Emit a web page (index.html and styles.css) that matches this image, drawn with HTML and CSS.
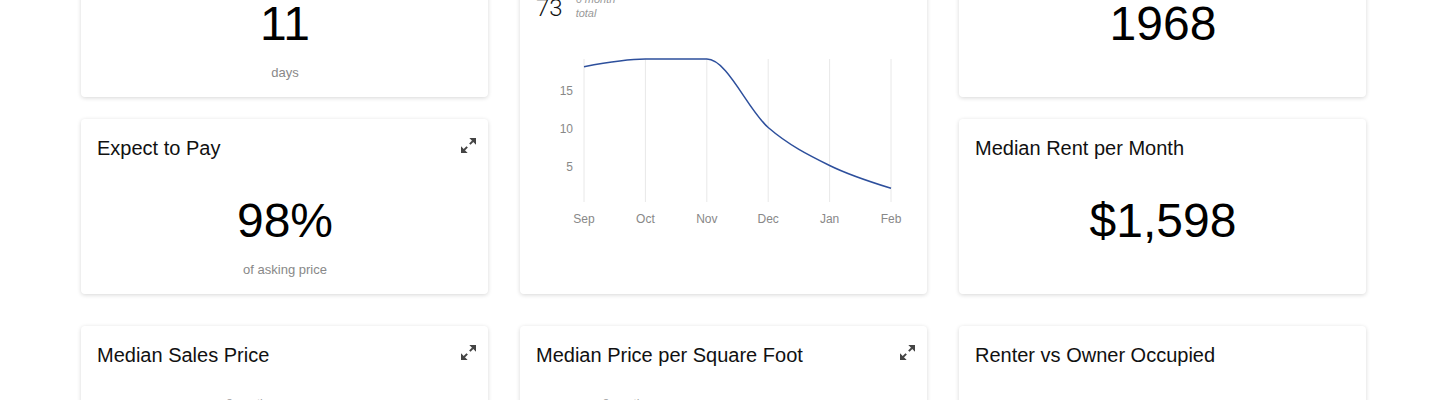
FILE: index.html
```html
<!DOCTYPE html>
<html lang="en">
<head>
<meta charset="utf-8">
<title>Market Overview</title>
<link rel="stylesheet" href="styles.css">
</head>
<body>
<main class="dashboard">
  <section class="grid grid-top">
    <article class="card stat-card">
      <header class="card-head"><h2 class="card-title">Days on Market</h2></header>
      <div class="stat-value">11</div>
      <div class="stat-note">days</div>
    </article>

    <article class="card chart-card tall">
      <header class="card-head"><h2 class="card-title">Homes Sold</h2></header>
      <div class="summary">
        <span class="summary-value">73</span>
        <span class="summary-label">6 month<br>total</span>
      </div>
      <svg class="trend" width="407" height="210" viewBox="0 0 407 210">
        <g class="grid-lines">
          <line x1="64" y1="29" x2="64" y2="172"/>
          <line x1="125.4" y1="29" x2="125.4" y2="172"/>
          <line x1="186.8" y1="29" x2="186.8" y2="172"/>
          <line x1="248.2" y1="29" x2="248.2" y2="172"/>
          <line x1="309.6" y1="29" x2="309.6" y2="172"/>
          <line x1="371" y1="29" x2="371" y2="172"/>
        </g>
        <g class="axis-y">
          <text x="53" y="65">15</text>
          <text x="53" y="103">10</text>
          <text x="53" y="141">5</text>
        </g>
        <g class="axis-x">
          <text x="64" y="192.5">Sep</text>
          <text x="125.4" y="192.5">Oct</text>
          <text x="186.8" y="192.5">Nov</text>
          <text x="248.2" y="192.5">Dec</text>
          <text x="309.6" y="192.5">Jan</text>
          <text x="371" y="192.5">Feb</text>
        </g>
        <path class="series" d="M64,36.7 C84.47,32.9 104.93,29.1 125.4,29.1 C145.87,29.1 166.33,29.1 186.8,29.1 C207.27,29.1 227.73,79.77 248.2,97.5 C268.67,115.23 289.13,125.37 309.6,135.5 C330.07,145.63 350.53,151.97 371,158.3"/>
      </svg>
    </article>

    <article class="card stat-card">
      <header class="card-head"><h2 class="card-title">Median Year Built</h2></header>
      <div class="stat-value">1968</div>
    </article>

    <article class="card stat-card">
      <header class="card-head">
        <h2 class="card-title">Expect to Pay</h2>
        <svg class="expand" width="15" height="15" viewBox="3 3 18 18" aria-hidden="true">
          <path d="M21 3v8l-8-8z M3 21v-8l8 8z"/>
          <path class="stem" d="M17.2 6.8 13.6 10.4 M6.8 17.2 10.4 13.6"/>
        </svg>
      </header>
      <div class="stat-value">98%</div>
      <div class="stat-note">of asking price</div>
    </article>

    <article class="card stat-card">
      <header class="card-head"><h2 class="card-title">Median Rent per Month</h2></header>
      <div class="stat-value">$1,598</div>
    </article>
  </section>

  <section class="grid grid-bottom">
    <article class="card chart-card">
      <header class="card-head">
        <h2 class="card-title">Median Sales Price</h2>
        <svg class="expand" width="15" height="15" viewBox="3 3 18 18" aria-hidden="true">
          <path d="M21 3v8l-8-8z M3 21v-8l8 8z"/>
          <path class="stem" d="M17.2 6.8 13.6 10.4 M6.8 17.2 10.4 13.6"/>
        </svg>
      </header>
      <div class="summary">
        <span class="summary-value">$1,250,000</span>
        <span class="summary-label">3 month<br>median</span>
      </div>
    </article>

    <article class="card chart-card">
      <header class="card-head">
        <h2 class="card-title">Median Price per Square Foot</h2>
        <svg class="expand" width="15" height="15" viewBox="3 3 18 18" aria-hidden="true">
          <path d="M21 3v8l-8-8z M3 21v-8l8 8z"/>
          <path class="stem" d="M17.2 6.8 13.6 10.4 M6.8 17.2 10.4 13.6"/>
        </svg>
      </header>
      <div class="summary">
        <span class="summary-value">$512</span>
        <span class="summary-label">3 month<br>median</span>
      </div>
    </article>

    <article class="card chart-card">
      <header class="card-head"><h2 class="card-title">Renter vs Owner Occupied</h2></header>
    </article>
  </section>
</main>
</body>
</html>
```

FILE: styles.css
```css
html, body {
  margin: 0;
  padding: 0;
  background: #ffffff;
}

body {
  font-family: "Liberation Sans", Arial, sans-serif;
  color: #000;
  overflow: hidden;
}

.dashboard {
  width: 1285px;
  margin: -78px 0 0 81px;
}

.grid {
  display: grid;
  grid-template-columns: repeat(3, 407px);
  column-gap: 32px;
}

.grid-top {
  grid-template-rows: 175px 175px;
  row-gap: 22px;
}

.grid-bottom {
  margin-top: 32px;
  grid-template-rows: 372px;
}

.card {
  background: #fff;
  border-radius: 4px;
  box-shadow: 0 1px 4px rgba(0, 0, 0, 0.16);
  padding: 17px 15px 17px 16px;
  box-sizing: border-box;
  display: flex;
  flex-direction: column;
  overflow: hidden;
}

.tall {
  grid-row: span 2;
}

.card-head {
  display: flex;
  justify-content: space-between;
  align-items: flex-start;
  height: 24px;
}

.card-title {
  margin: 0;
  font-size: 20px;
  line-height: 24px;
  font-weight: 400;
  color: #111;
}

.expand {
  margin-top: 2px;
  margin-right: -3px;
  fill: #444;
}

.expand .stem {
  fill: none;
  stroke: #444;
  stroke-width: 2.4;
}

.stat-value {
  margin-top: 33px;
  font-size: 48px;
  line-height: 56px;
  text-align: center;
  color: #000;
}

.stat-note {
  margin-top: 13px;
  font-size: 13px;
  line-height: 16px;
  text-align: center;
  color: #888;
}

.summary {
  margin-top: 31px;
  display: flex;
  align-items: flex-end;
  gap: 13px;
  height: 28px;
}

.summary-value {
  font-family: Roboto, "Liberation Sans", sans-serif;
  font-weight: 300;
  font-size: 24px;
  line-height: 28px;
  color: #111;
}

.summary-label {
  font-size: 11px;
  line-height: 14px;
  font-style: italic;
  color: #999;
  margin-bottom: 2px;
}

.trend {
  display: block;
  margin: 8px 0 0 -16px;
}

.grid-lines line {
  stroke: #e8e8e8;
  stroke-width: 1;
}

.axis-y text,
.axis-x text {
  font-family: "Liberation Sans", Arial, sans-serif;
  font-size: 12px;
  fill: #888;
}

.axis-y text {
  text-anchor: end;
}

.axis-x text {
  text-anchor: middle;
}

.series {
  fill: none;
  stroke: #2d4f9c;
  stroke-width: 1.5;
}
```
